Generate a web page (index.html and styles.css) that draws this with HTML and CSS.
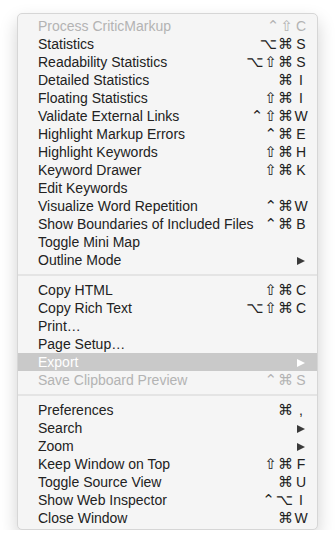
FILE: index.html
```html
<!DOCTYPE html>
<html lang="en">
<head>
    <meta charset="UTF-8">
    <meta name="viewport" content="width=device-width, initial-scale=1.0">
    <title>Menu</title>
    <link rel="stylesheet" href="styles.css">
</head>
<body>
    <div class="menu">
        <div class="item disabled"><span class="label">Process CriticMarkup</span><span class="mods">⌃⇧</span><span class="key">C</span></div>
        <div class="item"><span class="label">Statistics</span><span class="mods">⌥⌘</span><span class="key">S</span></div>
        <div class="item"><span class="label">Readability Statistics</span><span class="mods">⌥⇧⌘</span><span class="key">S</span></div>
        <div class="item"><span class="label">Detailed Statistics</span><span class="mods">⌘</span><span class="key">I</span></div>
        <div class="item"><span class="label">Floating Statistics</span><span class="mods">⇧⌘</span><span class="key">I</span></div>
        <div class="item"><span class="label">Validate External Links</span><span class="mods">⌃⇧⌘</span><span class="key">W</span></div>
        <div class="item"><span class="label">Highlight Markup Errors</span><span class="mods">⌃⌘</span><span class="key">E</span></div>
        <div class="item"><span class="label">Highlight Keywords</span><span class="mods">⇧⌘</span><span class="key">H</span></div>
        <div class="item"><span class="label">Keyword Drawer</span><span class="mods">⇧⌘</span><span class="key">K</span></div>
        <div class="item"><span class="label">Edit Keywords</span></div>
        <div class="item"><span class="label">Visualize Word Repetition</span><span class="mods">⌃⌘</span><span class="key">W</span></div>
        <div class="item"><span class="label">Show Boundaries of Included Files</span><span class="mods">⌃⌘</span><span class="key">B</span></div>
        <div class="item"><span class="label">Toggle Mini Map</span></div>
        <div class="item"><span class="label">Outline Mode</span><span class="key"><span class="arrow"></span></span></div>

        <div class="sep"></div>

        <div class="item"><span class="label">Copy HTML</span><span class="mods">⇧⌘</span><span class="key">C</span></div>
        <div class="item"><span class="label">Copy Rich Text</span><span class="mods">⌥⇧⌘</span><span class="key">C</span></div>
        <div class="item"><span class="label">Print…</span></div>
        <div class="item"><span class="label">Page Setup…</span></div>
        <div class="item selected"><span class="label">Export</span><span class="key"><span class="arrow"></span></span></div>
        <div class="item disabled"><span class="label">Save Clipboard Preview</span><span class="mods">⌃⌘</span><span class="key">S</span></div>

        <div class="sep"></div>

        <div class="item"><span class="label">Preferences</span><span class="mods">⌘</span><span class="key">,</span></div>
        <div class="item"><span class="label">Search</span><span class="key"><span class="arrow"></span></span></div>
        <div class="item"><span class="label">Zoom</span><span class="key"><span class="arrow"></span></span></div>
        <div class="item"><span class="label">Keep Window on Top</span><span class="mods">⇧⌘</span><span class="key">F</span></div>
        <div class="item"><span class="label">Toggle Source View</span><span class="mods">⌘</span><span class="key">U</span></div>
        <div class="item"><span class="label">Show Web Inspector</span><span class="mods">⌃⌥</span><span class="key">I</span></div>
        <div class="item"><span class="label">Close Window</span><span class="mods">⌘</span><span class="key">W</span></div>
    </div>
</body>
</html>
```

FILE: styles.css
```css
body {
    margin: 0;
    background-color: #ffffff;
    font-family: "Liberation Sans", Arial, "DejaVu Sans", sans-serif;
    font-size: 14px;
}
.menu {
    width: 301px;
    margin: 13px 0 0 17px;
    padding: 3px 0 2px;
    box-sizing: border-box;
    background-color: #f5f5f5;
    border: 1px solid #d6d6d6;
    border-radius: 5px;
    box-shadow: 0 8px 18px rgba(0, 0, 0, 0.18);
}
.item {
    display: flex;
    align-items: center;
    height: 18px;
    line-height: 18px;
    padding: 0 9px 0 20px;
    color: #222222;
}
.item.disabled {
    color: #b3b3b3;
}
.item.selected {
    background-color: #c9c9c9;
    color: #ffffff;
}
.label {
    flex: 1;
    white-space: nowrap;
}
.mods {
    font-family: "DejaVu Sans", sans-serif;
    font-size: 15px;
    letter-spacing: 1px;
}
.key {
    width: 14px;
    text-align: center;
}
.arrow {
    display: inline-block;
    width: 0;
    height: 0;
    border-top: 4px solid transparent;
    border-bottom: 4px solid transparent;
    border-left: 8px solid #3a3a3a;
}
.selected .arrow {
    border-left-color: #ffffff;
}
.sep {
    height: 2px;
    margin: 5px 0;
    background-color: #e4e4e4;
}
```
